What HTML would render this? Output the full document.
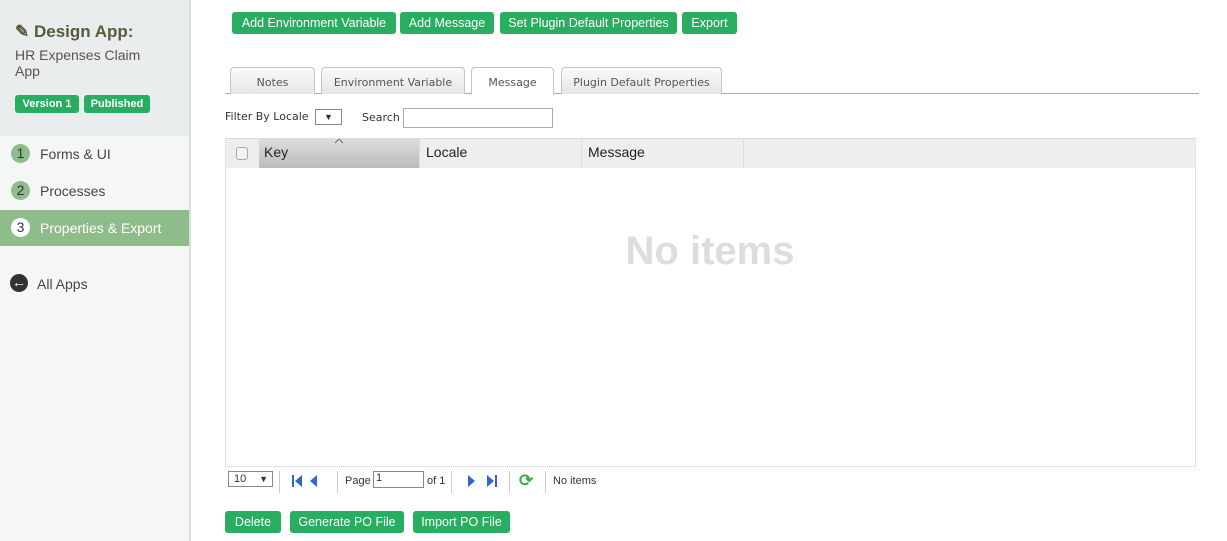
<!DOCTYPE html>
<html><head><style>
*{box-sizing:border-box;margin:0;padding:0}
body{width:1227px;height:541px;overflow:hidden;background:#fff;font-family:"Liberation Sans",sans-serif;position:relative;color:#333}
.a{position:absolute}
.btn{position:absolute;background:#27ae60;color:#fff;font-size:12.5px;border-radius:3px;text-align:center;line-height:22px;height:22px}
.tab{position:absolute;top:67px;height:27px;border:1px solid #c5c5c5;border-bottom:none;border-radius:4px 4px 0 0;background:linear-gradient(#fafafa,#e6e6e6);font-family:"DejaVu Sans",sans-serif;font-size:11px;color:#555;text-align:center;line-height:29px}
.num{position:absolute;left:11px;width:19px;height:19px;border-radius:50%;background:#8fbc8b;color:#333;font-size:14px;text-align:center;line-height:19px}
.nav{position:absolute;left:40px;font-size:14px;color:#444}
.sep{position:absolute;top:471px;width:1px;height:22px;background:#ccc}
</style></head><body>
<div class="a" style="left:0;top:0;width:190px;height:136px;background:#eaedee"></div>
<div class="a" style="left:0;top:136px;width:190px;height:405px;background:#f5f7f7"></div>
<div class="a" style="left:189px;top:0;width:2px;height:541px;background:#ddd"></div>
<div class="a" style="left:15px;top:22px;font-size:17px;font-weight:bold;color:#5a5a3a">✎ Design App:</div>
<div class="a" style="left:15px;top:48px;font-size:14px;color:#555;line-height:15.5px;width:140px">HR Expenses Claim App</div>
<div class="a" style="left:15px;top:95px;width:64px;height:18px;background:#27ae60;color:#fff;font-size:11px;font-weight:bold;border-radius:3px;text-align:center;line-height:18px">Version 1</div>
<div class="a" style="left:84px;top:95px;width:66px;height:18px;background:#27ae60;color:#fff;font-size:11px;font-weight:bold;border-radius:3px;text-align:center;line-height:18px">Published</div>
<div class="num" style="top:144px">1</div><div class="nav" style="top:146px">Forms &amp; UI</div>
<div class="num" style="top:181px">2</div><div class="nav" style="top:183px">Processes</div>
<div class="a" style="left:0;top:210px;width:189px;height:36px;background:#8fbc8b"></div>
<div class="num" style="top:218px;background:#fff">3</div><div class="nav" style="top:220px;color:#fff">Properties &amp; Export</div>
<div class="a" style="left:10px;top:274px;width:18px;height:18px;border-radius:50%;background:#333;color:#fff;font-size:14px;text-align:center;line-height:17px;font-weight:bold">←</div>
<div class="nav" style="left:37px;top:276px">All Apps</div>

<div class="btn" style="left:232px;top:12px;width:164px">Add Environment Variable</div>
<div class="btn" style="left:400px;top:12px;width:94px">Add Message</div>
<div class="btn" style="left:500px;top:12px;width:177px">Set Plugin Default Properties</div>
<div class="btn" style="left:682px;top:12px;width:55px">Export</div>

<div class="a" style="left:225px;top:93px;width:974px;height:1px;background:#aaa"></div>
<div class="tab" style="left:230px;width:85px">Notes</div>
<div class="tab" style="left:321px;width:144px">Environment Variable</div>
<div class="tab" style="left:471px;width:83px;background:#fff;height:28px">Message</div>
<div class="tab" style="left:561px;width:161px">Plugin Default Properties</div>

<div class="a" style="left:225px;top:110px;font-family:'DejaVu Sans',sans-serif;font-size:11px;color:#333">Filter By Locale</div>
<div class="a" style="left:315px;top:109px;width:27px;height:16px;border:1px solid #888;font-size:9px;text-align:center;line-height:14px">▼</div>
<div class="a" style="left:362px;top:111px;font-family:'DejaVu Sans',sans-serif;font-size:11px">Search</div>
<div class="a" style="left:403px;top:108px;width:150px;height:20px;border:1px solid #aaa"></div>

<div class="a" style="left:225px;top:138px;width:971px;height:329px;border:1px dotted #ccc;border-top:1px solid #ddd"></div>
<div class="a" style="left:226px;top:139px;width:969px;height:29px;background:#eee"></div>
<div class="a" style="left:236px;top:147px;width:12px;height:13px;border:1px solid #aaa;border-radius:3px;background:#f4f4f4"></div>
<div class="a" style="left:259px;top:139px;width:160px;height:29px;background:linear-gradient(#ddd,#bbb)"></div>
<svg class="a" style="left:335px;top:139px" width="8" height="5"><path d="M0 4 L4 0 L8 4" fill="none" stroke="#666"/></svg>
<div class="a" style="left:264px;top:144px;font-size:14px;color:#222">Key</div>
<div class="a" style="left:419px;top:139px;width:1px;height:29px;background:#ddd"></div>
<div class="a" style="left:426px;top:144px;font-size:14px;color:#222">Locale</div>
<div class="a" style="left:581px;top:139px;width:1px;height:29px;background:#ddd"></div>
<div class="a" style="left:588px;top:144px;font-size:14px;color:#222">Message</div>
<div class="a" style="left:743px;top:139px;width:1px;height:29px;background:#ddd"></div>
<div class="a" style="left:610px;top:229px;width:200px;text-align:center;font-size:40px;font-weight:bold;color:#ddd">No items</div>

<div class="a" style="left:228px;top:471px;width:45px;height:16px;border:1px solid #888;font-size:11px;line-height:14px;padding-left:5px">10 <span style="float:right;padding-right:4px;font-size:9px">▼</span></div>
<div class="sep" style="left:279px"></div>
<svg class="a" style="left:292px;top:475px" width="40" height="12"><rect x="0" y="0" width="2" height="12" fill="#36c"/><path d="M10 0 L3 6 L10 12Z M25 0 L18 6 L25 12Z" fill="#36c"/></svg>
<div class="sep" style="left:337px"></div>
<div class="a" style="left:345px;top:475px;font-size:11px">Page</div>
<div class="a" style="left:373px;top:471px;width:51px;height:17px;border:1px solid #888;font-size:11px;padding-left:2px">1</div>
<div class="a" style="left:427px;top:475px;font-size:11px">of 1</div>
<div class="sep" style="left:451px"></div>
<svg class="a" style="left:466px;top:475px" width="34" height="12"><path d="M2 0 L9 6 L2 12Z M21 0 L28 6 L21 12Z" fill="#36c"/><rect x="29" y="0" width="2" height="12" fill="#36c"/></svg>
<div class="sep" style="left:509px"></div>
<div class="a" style="left:519px;top:471px;color:#4a4;font-size:17px;font-weight:bold">⟳</div>
<div class="sep" style="left:545px"></div>
<div class="a" style="left:553px;top:475px;font-size:11px">No items</div>

<div class="btn" style="left:225px;top:511px;width:56px">Delete</div>
<div class="btn" style="left:290px;top:511px;width:114px">Generate PO File</div>
<div class="btn" style="left:413px;top:511px;width:97px">Import PO File</div>
</body></html>
